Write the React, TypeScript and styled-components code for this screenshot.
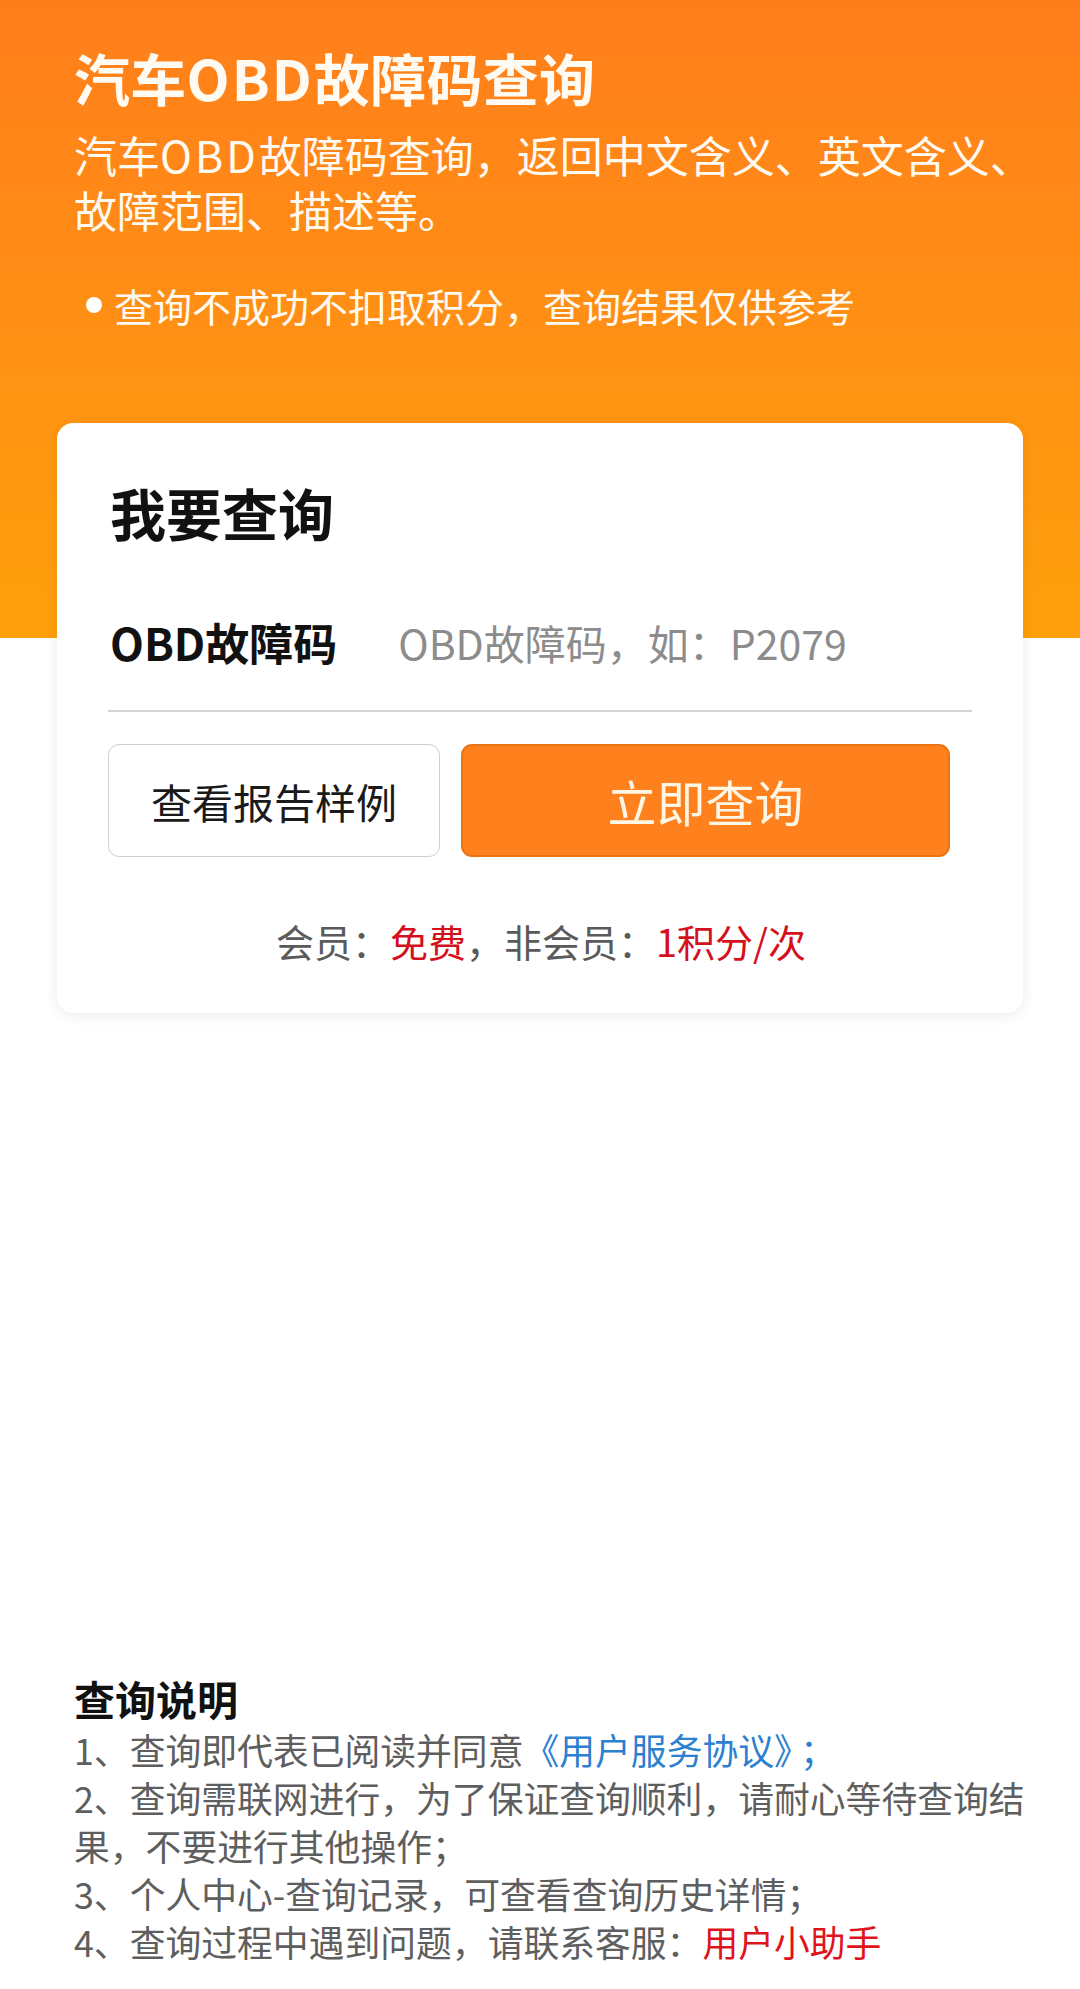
import React from "react";
import styled, { createGlobalStyle } from "styled-components";

const GlobalStyle = createGlobalStyle`
  html, body {
    margin: 0;
    padding: 0;
    background: #ffffff;
  }
  body {
    font-family: "Noto Sans CJK SC", "Noto Sans", sans-serif;
  }
  * { box-sizing: border-box; }
`;

const Page = styled.div`
  min-height: 1989px;
  display: flex;
  flex-direction: column;
  background: linear-gradient(
    180deg,
    #ff7e1b 0px,
    #ff8c16 260px,
    #ffa10b 638px,
    #ffffff 638px,
    #ffffff 100%
  );
`;

const Header = styled.header`
  padding: 42px 30px 0 74px;
  color: #fffaf2;
`;

const Title = styled.h1`
  margin: 0;
  font-size: 56px;
  line-height: 70px;
  font-weight: 700;
  letter-spacing: 0.3px;
`;

const Latin = styled.span<{ $spacing?: number }>`
  letter-spacing: ${(p) => p.$spacing ?? 0}px;
`;

const Subtitle = styled.p`
  margin: 15px 0 0;
  font-size: 43px;
  line-height: 55px;
  font-weight: 400;
`;

const Notice = styled.div`
  margin-top: 43px;
  margin-left: 12px;
  display: flex;
  align-items: center;
  gap: 12px;
  font-size: 39px;
  line-height: 50px;
`;

const Dot = styled.span`
  width: 16px;
  height: 16px;
  border-radius: 50%;
  background: #ffffff;
  flex: none;
`;

const Card = styled.section`
  margin: 93px 57px 0;
  background: #ffffff;
  border-radius: 16px;
  box-shadow: 0 3px 14px rgba(0, 0, 0, 0.08);
  padding: 54px 51px 47px 53px;
`;

const CardTitle = styled.h2`
  margin: 0;
  font-size: 56px;
  line-height: 70px;
  font-weight: 700;
  color: #111111;
`;

const InputRow = styled.label`
  margin-top: 65px;
  display: flex;
  align-items: center;
  gap: 61px;
  height: 100px;
  padding-bottom: 38px;
  border-bottom: 2.5px solid #d4d4d4;
  margin-left: -2px;
  padding-left: 2px;
`;

const FieldLabel = styled.span`
  font-size: 44px;
  line-height: 60px;
  font-weight: 700;
  color: #111111;
  flex: none;
`;

const Field = styled.input`
  flex: 1;
  min-width: 0;
  border: none;
  outline: none;
  background: transparent;
  padding: 0;
  font-family: "Noto Sans CJK SC", "Noto Sans", sans-serif;
  font-size: 41px;
  line-height: 60px;
  color: #333;
  &::placeholder {
    color: #8c8c8c;
  }
`;

const Buttons = styled.div`
  margin-top: 32px;
  display: flex;
  gap: 21px;
  margin-left: -2px;
  padding-right: 22px;
`;

const Button = styled.button<{ $primary?: boolean }>`
  height: 113px;
  border-radius: 11px;
  font-family: "Noto Sans CJK SC", "Noto Sans", sans-serif;
  cursor: pointer;
  display: flex;
  align-items: center;
  justify-content: center;
  padding: 0;
  ${(p) =>
    p.$primary
      ? `
    flex: 1;
    background: #fe811d;
    border: 2px solid #ea7414;
    color: #fff6e6;
    font-size: 49px;
    font-weight: 400;
  `
      : `
    width: 332px;
    flex: none;
    background: #ffffff;
    border: 1.5px solid #cfcfcf;
    color: #1a1a1a;
    font-size: 41px;
    font-weight: 400;
  `}
`;

const Price = styled.p`
  margin: 59px 0 0;
  text-align: center;
  font-size: 38px;
  line-height: 50px;
  color: #5a5a5a;
`;

const Red = styled.span`
  color: #d4101c;
`;

const Footer = styled.footer`
  margin-top: auto;
  padding: 0 40px 24px 74px;
`;

const FooterTitle = styled.h3`
  margin: 0;
  font-size: 41px;
  line-height: 54px;
  font-weight: 700;
  color: #111111;
`;

const Notes = styled.ol`
  list-style: none;
  margin: 0;
  padding: 0;
  font-size: 35.8px;
  line-height: 48px;
  color: #5e5e5e;
`;

const Note = styled.li`
  margin: 0;
`;

const Link = styled.a`
  color: #2d7fd0;
  text-decoration: none;
`;

const Semicolon = styled.span`
  color: #2d7fd0;
  margin-left: 8px;
`;

const Helper = styled.a`
  color: #e0121c;
  text-decoration: none;
`;

export default function App() {
  return (
    <Page>
      <GlobalStyle />
      <Header>
        <Title>
          汽车<Latin $spacing={2}>OBD</Latin>故障码查询
        </Title>
        <Subtitle>
          汽车<Latin $spacing={3}>OBD</Latin>故障码查询，返回中文含义、英文含义、故障范围、描述等。
        </Subtitle>
        <Notice>
          <Dot />
          <span>查询不成功不扣取积分，查询结果仅供参考</span>
        </Notice>
      </Header>

      <Card>
        <CardTitle>我要查询</CardTitle>
        <InputRow>
          <FieldLabel>OBD故障码</FieldLabel>
          <Field placeholder="OBD故障码，如：P2079" />
        </InputRow>
        <Buttons>
          <Button>查看报告样例</Button>
          <Button $primary>立即查询</Button>
        </Buttons>
        <Price>
          会员：<Red>免费</Red>，非会员：<Red>1积分/次</Red>
        </Price>
      </Card>

      <Footer>
        <FooterTitle>查询说明</FooterTitle>
        <Notes>
          <Note>
            1、查询即代表已阅读并同意<Link href="#">《用户服务协议》</Link>
            <Semicolon>；</Semicolon>
          </Note>
          <Note>2、查询需联网进行，为了保证查询顺利，请耐心等待查询结果，不要进行其他操作；</Note>
          <Note>3、个人中心-查询记录，可查看查询历史详情；</Note>
          <Note>
            4、查询过程中遇到问题，请联系客服：<Helper href="#">用户小助手</Helper>
          </Note>
        </Notes>
      </Footer>
    </Page>
  );
}
